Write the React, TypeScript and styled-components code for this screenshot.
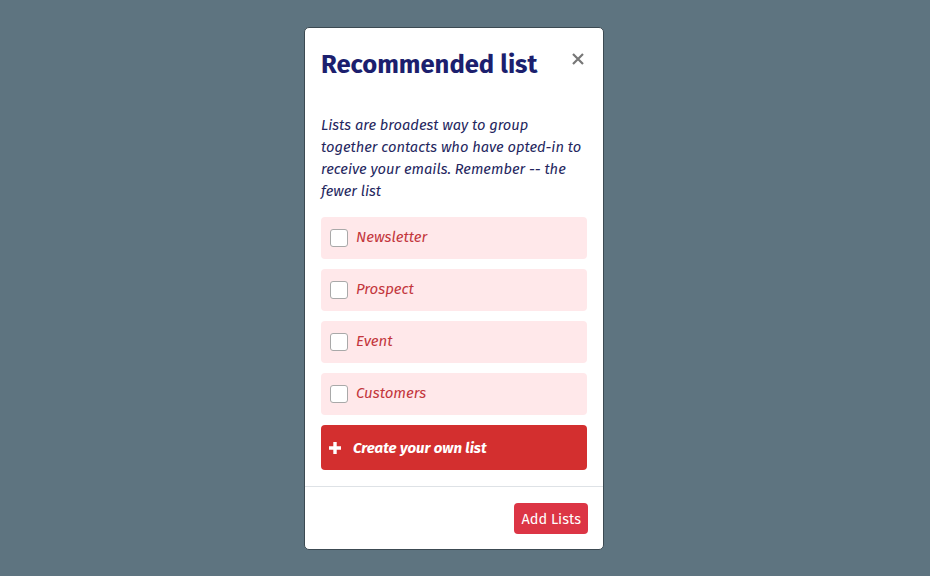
import React, { useState } from "react";
import styled, { createGlobalStyle } from "styled-components";

const GlobalStyle = createGlobalStyle`
  html, body {
    margin: 0;
    padding: 0;
    background: #5e7480;
    font-family: "Fira Sans", Lato, "Open Sans", sans-serif;
  }
`;

const Backdrop = styled.div`
  display: flex;
  justify-content: center;
  align-items: flex-start;
  width: 930px;
  height: 576px;
  padding: 27px 22px 0 0;
  box-sizing: border-box;
`;

const Modal = styled.div`
  width: 300px;
  background: #ffffff;
  border: 1px solid #3c4a52;
  border-radius: 5px;
  display: flex;
  flex-direction: column;
  box-sizing: border-box;
`;

const Header = styled.div`
  display: flex;
  justify-content: space-between;
  align-items: flex-start;
  padding: 20px 16px 0 16px;
`;

const Title = styled.h2`
  margin: 0;
  font-size: 25.6px;
  font-weight: 700;
  color: #1c1f6e;
  line-height: 34px;
`;

const CloseButton = styled.button`
  border: none;
  background: none;
  padding: 0;
  margin-top: 5px;
  margin-right: 3px;
  color: #777777;
  cursor: pointer;
  display: flex;
`;

const Body = styled.div`
  padding: 32px 16px 16px 16px;
  display: flex;
  flex-direction: column;
  gap: 10px;
`;

const Description = styled.p`
  margin: 0 0 5px 0;
  font-size: 14.7px;
  font-style: italic;
  line-height: 22px;
  color: #24265e;
`;

const ListItem = styled.label`
  display: flex;
  align-items: center;
  gap: 8px;
  height: 42px;
  padding: 0 9px;
  background: #ffe8ea;
  border-radius: 4px;
  cursor: pointer;
`;

const Box = styled.span<{ $checked: boolean }>`
  width: 18px;
  height: 18px;
  box-sizing: border-box;
  border: 1px solid #a9a9a9;
  border-radius: 3px;
  background: ${({ $checked }) => ($checked ? "#d32f2f" : "#ffffff")};
`;

const ItemLabel = styled.span`
  font-size: 15px;
  font-style: italic;
  color: #c3363c;
  margin-top: -2px;
`;

const CreateButton = styled.button`
  display: flex;
  align-items: center;
  gap: 12px;
  height: 45px;
  padding: 0 8px;
  border: none;
  border-radius: 4px;
  background: #d32f2f;
  color: #ffffff;
  font-family: inherit;
  font-size: 15px;
  font-weight: 700;
  font-style: italic;
  cursor: pointer;
`;

const Footer = styled.div`
  display: flex;
  justify-content: flex-end;
  padding: 16px 15px 15px 15px;
  border-top: 1px solid #dee2e6;
`;

const AddButton = styled.button`
  height: 31px;
  padding: 0 7px;
  border: none;
  border-radius: 4px;
  background: #dc3545;
  color: #ffffff;
  font-family: inherit;
  font-size: 14.5px;
  cursor: pointer;
`;

const lists = ["Newsletter", "Prospect", "Event", "Customers"];

const App: React.FC = () => {
  const [checked, setChecked] = useState<Record<string, boolean>>({});

  return (
    <>
      <GlobalStyle />
      <Backdrop>
        <Modal>
          <Header>
            <Title>Recommended list</Title>
            <CloseButton aria-label="Close">
              <svg width="12" height="12" viewBox="0 0 12 12">
                <path
                  d="M1 1 L11 11 M11 1 L1 11"
                  stroke="currentColor"
                  strokeWidth="2.2"
                />
              </svg>
            </CloseButton>
          </Header>
          <Body>
            <Description>
              Lists are broadest way to group together contacts who have
              opted-in to receive your emails. Remember -- the fewer list
            </Description>
            {lists.map((name) => (
              <ListItem
                key={name}
                onClick={() =>
                  setChecked((c) => ({ ...c, [name]: !c[name] }))
                }
              >
                <Box $checked={!!checked[name]} />
                <ItemLabel>{name}</ItemLabel>
              </ListItem>
            ))}
            <CreateButton>
              <svg width="12" height="12" viewBox="0 0 12 12">
                <path d="M4.3 0h3.4v4.3H12v3.4H7.7V12H4.3V7.7H0V4.3h4.3z" fill="#fff" />
              </svg>
              Create your own list
            </CreateButton>
          </Body>
          <Footer>
            <AddButton>Add Lists</AddButton>
          </Footer>
        </Modal>
      </Backdrop>
    </>
  );
};

export default App;
